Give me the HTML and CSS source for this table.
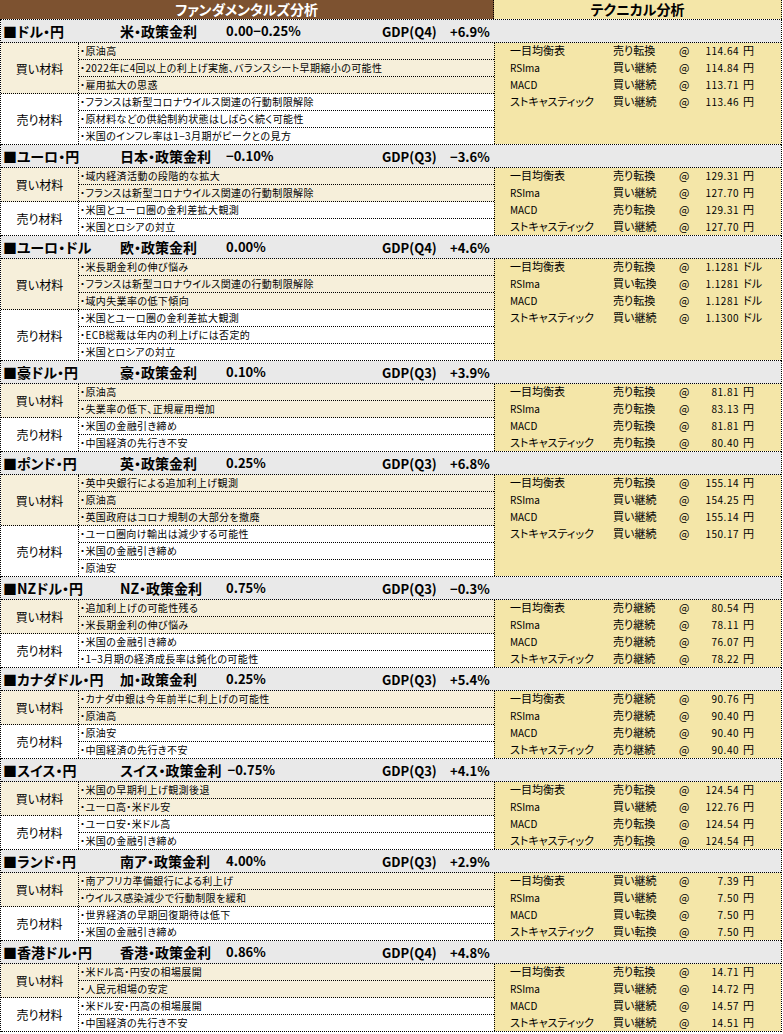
FILE: index.html
```html
<!DOCTYPE html>
<html lang="ja">
<head>
<meta charset="utf-8">
<title>ファンダメンタルズ分析 / テクニカル分析</title>
<link rel="stylesheet" href="styles.css">
</head>
<body>
<div class="sheet">
  <div class="head">
    <div class="head-left">ファンダメンタルズ分析</div>
    <div class="head-right">テクニカル分析</div>
  </div>

  <section class="pair">
    <div class="title"><span class="name">■ドル・円</span><span class="policy-block"><span class="policy">米・政策金利</span><span class="rate">0.00−0.25%</span></span><span class="gdp">GDP(Q4)</span><span class="growth">+6.9%</span></div>
    <div class="body">
      <div class="left">
        <div class="group buy"><div class="label">買い材料</div><ul class="items"><li>・原油高</li><li>・2022年に4回以上の利上げ実施、バランスシート早期縮小の可能性</li><li>・雇用拡大の思惑</li></ul></div>
        <div class="group sell"><div class="label">売り材料</div><ul class="items"><li>・フランスは新型コロナウイルス関連の行動制限解除</li><li>・原材料などの供給制約状態はしばらく続く可能性</li><li>・米国のインフレ率は1−3月期がピークとの見方</li></ul></div>
      </div>
      <div class="tech">
        <span>一目均衡表</span><span>売り転換</span><span>@</span><span class="val">114.64</span><span class="unit">円</span>
        <span class="sm">RSIma</span><span>買い継続</span><span>@</span><span class="val">114.84</span><span class="unit">円</span>
        <span class="sm">MACD</span><span>買い継続</span><span>@</span><span class="val">113.71</span><span class="unit">円</span>
        <span>ストキャスティック</span><span>買い継続</span><span>@</span><span class="val">113.46</span><span class="unit">円</span>
      </div>
    </div>
  </section>

  <section class="pair">
    <div class="title"><span class="name">■ユーロ・円</span><span class="policy-block"><span class="policy">日本・政策金利</span><span class="rate">−0.10%</span></span><span class="gdp">GDP(Q3)</span><span class="growth">−3.6%</span></div>
    <div class="body">
      <div class="left">
        <div class="group buy"><div class="label">買い材料</div><ul class="items"><li>・域内経済活動の段階的な拡大</li><li>・フランスは新型コロナウイルス関連の行動制限解除</li></ul></div>
        <div class="group sell"><div class="label">売り材料</div><ul class="items"><li>・米国とユーロ圏の金利差拡大観測</li><li>・米国とロシアの対立</li></ul></div>
      </div>
      <div class="tech">
        <span>一目均衡表</span><span>売り転換</span><span>@</span><span class="val">129.31</span><span class="unit">円</span>
        <span class="sm">RSIma</span><span>買い継続</span><span>@</span><span class="val">127.70</span><span class="unit">円</span>
        <span class="sm">MACD</span><span>売り転換</span><span>@</span><span class="val">129.31</span><span class="unit">円</span>
        <span>ストキャスティック</span><span>買い継続</span><span>@</span><span class="val">127.70</span><span class="unit">円</span>
      </div>
    </div>
  </section>

  <section class="pair">
    <div class="title"><span class="name">■ユーロ・ドル</span><span class="policy-block"><span class="policy">欧・政策金利</span><span class="rate">0.00%</span></span><span class="gdp">GDP(Q4)</span><span class="growth">+4.6%</span></div>
    <div class="body">
      <div class="left">
        <div class="group buy"><div class="label">買い材料</div><ul class="items"><li>・米長期金利の伸び悩み</li><li>・フランスは新型コロナウイルス関連の行動制限解除</li><li>・域内失業率の低下傾向</li></ul></div>
        <div class="group sell"><div class="label">売り材料</div><ul class="items"><li>・米国とユーロ圏の金利差拡大観測</li><li>・ECB総裁は年内の利上げには否定的</li><li>・米国とロシアの対立</li></ul></div>
      </div>
      <div class="tech">
        <span>一目均衡表</span><span>売り転換</span><span>@</span><span class="val">1.1281</span><span class="unit">ドル</span>
        <span class="sm">RSIma</span><span>買い転換</span><span>@</span><span class="val">1.1281</span><span class="unit">ドル</span>
        <span class="sm">MACD</span><span>売り転換</span><span>@</span><span class="val">1.1281</span><span class="unit">ドル</span>
        <span>ストキャスティック</span><span>買い継続</span><span>@</span><span class="val">1.1300</span><span class="unit">ドル</span>
      </div>
    </div>
  </section>

  <section class="pair">
    <div class="title"><span class="name">■豪ドル・円</span><span class="policy-block"><span class="policy">豪・政策金利</span><span class="rate">0.10%</span></span><span class="gdp">GDP(Q3)</span><span class="growth">+3.9%</span></div>
    <div class="body">
      <div class="left">
        <div class="group buy"><div class="label">買い材料</div><ul class="items"><li>・原油高</li><li>・失業率の低下、正規雇用増加</li></ul></div>
        <div class="group sell"><div class="label">売り材料</div><ul class="items"><li>・米国の金融引き締め</li><li>・中国経済の先行き不安</li></ul></div>
      </div>
      <div class="tech">
        <span>一目均衡表</span><span>売り転換</span><span>@</span><span class="val">81.81</span><span class="unit">円</span>
        <span class="sm">RSIma</span><span>売り転換</span><span>@</span><span class="val">83.13</span><span class="unit">円</span>
        <span class="sm">MACD</span><span>売り転換</span><span>@</span><span class="val">81.81</span><span class="unit">円</span>
        <span>ストキャスティック</span><span>売り転換</span><span>@</span><span class="val">80.40</span><span class="unit">円</span>
      </div>
    </div>
  </section>

  <section class="pair">
    <div class="title"><span class="name">■ポンド・円</span><span class="policy-block"><span class="policy">英・政策金利</span><span class="rate">0.25%</span></span><span class="gdp">GDP(Q3)</span><span class="growth">+6.8%</span></div>
    <div class="body">
      <div class="left">
        <div class="group buy"><div class="label">買い材料</div><ul class="items"><li>・英中央銀行による追加利上げ観測</li><li>・原油高</li><li>・英国政府はコロナ規制の大部分を撤廃</li></ul></div>
        <div class="group sell"><div class="label">売り材料</div><ul class="items"><li>・ユーロ圏向け輸出は減少する可能性</li><li>・米国の金融引き締め</li><li>・原油安</li></ul></div>
      </div>
      <div class="tech">
        <span>一目均衡表</span><span>売り転換</span><span>@</span><span class="val">155.14</span><span class="unit">円</span>
        <span class="sm">RSIma</span><span>買い継続</span><span>@</span><span class="val">154.25</span><span class="unit">円</span>
        <span class="sm">MACD</span><span>買い継続</span><span>@</span><span class="val">155.14</span><span class="unit">円</span>
        <span>ストキャスティック</span><span>買い継続</span><span>@</span><span class="val">150.17</span><span class="unit">円</span>
      </div>
    </div>
  </section>

  <section class="pair">
    <div class="title"><span class="name">■NZドル・円</span><span class="policy-block"><span class="policy">NZ・政策金利</span><span class="rate">0.75%</span></span><span class="gdp">GDP(Q3)</span><span class="growth">−0.3%</span></div>
    <div class="body">
      <div class="left">
        <div class="group buy"><div class="label">買い材料</div><ul class="items"><li>・追加利上げの可能性残る</li><li>・米長期金利の伸び悩み</li></ul></div>
        <div class="group sell"><div class="label">売り材料</div><ul class="items"><li>・米国の金融引き締め</li><li>・1−3月期の経済成長率は鈍化の可能性</li></ul></div>
      </div>
      <div class="tech">
        <span>一目均衡表</span><span>売り継続</span><span>@</span><span class="val">80.54</span><span class="unit">円</span>
        <span class="sm">RSIma</span><span>売り継続</span><span>@</span><span class="val">78.11</span><span class="unit">円</span>
        <span class="sm">MACD</span><span>売り継続</span><span>@</span><span class="val">76.07</span><span class="unit">円</span>
        <span>ストキャスティック</span><span>売り継続</span><span>@</span><span class="val">78.22</span><span class="unit">円</span>
      </div>
    </div>
  </section>

  <section class="pair">
    <div class="title"><span class="name">■カナダドル・円</span><span class="policy-block"><span class="policy">加・政策金利</span><span class="rate">0.25%</span></span><span class="gdp">GDP(Q3)</span><span class="growth">+5.4%</span></div>
    <div class="body">
      <div class="left">
        <div class="group buy"><div class="label">買い材料</div><ul class="items"><li>・カナダ中銀は今年前半に利上げの可能性</li><li>・原油高</li></ul></div>
        <div class="group sell"><div class="label">売り材料</div><ul class="items"><li>・原油安</li><li>・中国経済の先行き不安</li></ul></div>
      </div>
      <div class="tech">
        <span>一目均衡表</span><span>売り継続</span><span>@</span><span class="val">90.76</span><span class="unit">円</span>
        <span class="sm">RSIma</span><span>売り継続</span><span>@</span><span class="val">90.40</span><span class="unit">円</span>
        <span class="sm">MACD</span><span>売り継続</span><span>@</span><span class="val">90.40</span><span class="unit">円</span>
        <span>ストキャスティック</span><span>売り継続</span><span>@</span><span class="val">90.40</span><span class="unit">円</span>
      </div>
    </div>
  </section>

  <section class="pair">
    <div class="title"><span class="name">■スイス・円</span><span class="policy-block"><span class="policy">スイス・政策金利</span><span class="rate">−0.75%</span></span><span class="gdp">GDP(Q3)</span><span class="growth">+4.1%</span></div>
    <div class="body">
      <div class="left">
        <div class="group buy"><div class="label">買い材料</div><ul class="items"><li>・米国の早期利上げ観測後退</li><li>・ユーロ高・米ドル安</li></ul></div>
        <div class="group sell"><div class="label">売り材料</div><ul class="items"><li>・ユーロ安・米ドル高</li><li>・米国の金融引き締め</li></ul></div>
      </div>
      <div class="tech">
        <span>一目均衡表</span><span>売り転換</span><span>@</span><span class="val">124.54</span><span class="unit">円</span>
        <span class="sm">RSIma</span><span>買い継続</span><span>@</span><span class="val">122.76</span><span class="unit">円</span>
        <span class="sm">MACD</span><span>売り転換</span><span>@</span><span class="val">124.54</span><span class="unit">円</span>
        <span>ストキャスティック</span><span>売り転換</span><span>@</span><span class="val">124.54</span><span class="unit">円</span>
      </div>
    </div>
  </section>

  <section class="pair">
    <div class="title"><span class="name">■ランド・円</span><span class="policy-block"><span class="policy">南ア・政策金利</span><span class="rate">4.00%</span></span><span class="gdp">GDP(Q3)</span><span class="growth">+2.9%</span></div>
    <div class="body">
      <div class="left">
        <div class="group buy"><div class="label">買い材料</div><ul class="items"><li>・南アフリカ準備銀行による利上げ</li><li>・ウイルス感染減少で行動制限を緩和</li></ul></div>
        <div class="group sell"><div class="label">売り材料</div><ul class="items"><li>・世界経済の早期回復期待は低下</li><li>・米国の金融引き締め</li></ul></div>
      </div>
      <div class="tech">
        <span>一目均衡表</span><span>買い継続</span><span>@</span><span class="val">7.39</span><span class="unit">円</span>
        <span class="sm">RSIma</span><span>買い継続</span><span>@</span><span class="val">7.50</span><span class="unit">円</span>
        <span class="sm">MACD</span><span>買い転換</span><span>@</span><span class="val">7.50</span><span class="unit">円</span>
        <span>ストキャスティック</span><span>買い転換</span><span>@</span><span class="val">7.50</span><span class="unit">円</span>
      </div>
    </div>
  </section>

  <section class="pair">
    <div class="title"><span class="name">■香港ドル・円</span><span class="policy-block"><span class="policy">香港・政策金利</span><span class="rate">0.86%</span></span><span class="gdp">GDP(Q4)</span><span class="growth">+4.8%</span></div>
    <div class="body">
      <div class="left">
        <div class="group buy"><div class="label">買い材料</div><ul class="items"><li>・米ドル高・円安の相場展開</li><li>・人民元相場の安定</li></ul></div>
        <div class="group sell"><div class="label">売り材料</div><ul class="items"><li>・米ドル安・円高の相場展開</li><li>・中国経済の先行き不安</li></ul></div>
      </div>
      <div class="tech">
        <span>一目均衡表</span><span>売り転換</span><span>@</span><span class="val">14.71</span><span class="unit">円</span>
        <span class="sm">RSIma</span><span>買い継続</span><span>@</span><span class="val">14.72</span><span class="unit">円</span>
        <span class="sm">MACD</span><span>買い継続</span><span>@</span><span class="val">14.57</span><span class="unit">円</span>
        <span>ストキャスティック</span><span>買い継続</span><span>@</span><span class="val">14.51</span><span class="unit">円</span>
      </div>
    </div>
  </section>
</div>
</body>
</html>
```

FILE: styles.css
```css
* { box-sizing: border-box; }

html, body {
  margin: 0;
  padding: 0;
  background: #ffffff;
}

body {
  font-family: "Noto Sans CJK JP", "Liberation Sans", sans-serif;
  font-feature-settings: "palt";
  color: #000;
}

.sheet {
  width: 782px;
}

.head {
  display: flex;
  height: 20px;
  border-bottom: 1px dotted #000;
}

.head-left {
  width: 494px;
  background: #7d5230;
  color: #fff;
  border-right: 1px dotted #000;
  font-weight: bold;
  font-size: 14px;
  line-height: 19px;
  text-align: center;
}

.head-right {
  flex: 1;
  background: #f4e6a8;
  font-weight: bold;
  font-size: 14px;
  line-height: 19px;
  text-align: center;
  border-right: 1px dotted #000;
}

.pair {
  border-left: 1px dotted #000;
  border-right: 1px dotted #000;
}

.title {
  display: flex;
  align-items: center;
  height: 23px;
  padding-left: 2px;
  background: #e9e9e9;
  border-bottom: 1px dotted #000;
  font-weight: bold;
  font-size: 14px;
  white-space: nowrap;
}

.name {
  width: 117px;
}

.policy-block {
  width: 262px;
  display: flex;
}

.policy {
  min-width: 100px;
  margin-right: 6px;
}

.rate,
.gdp,
.growth {
  font-size: 13px;
}

.gdp {
  width: 68px;
}

.body {
  display: flex;
  border-bottom: 1px dotted #000;
}

.left {
  width: 493px;
}

.group {
  display: flex;
}

.buy {
  background: #f6efda;
  border-bottom: 1px dotted #000;
}

.sell {
  background: #ffffff;
}

.label {
  width: 78px;
  border-right: 1px dotted #000;
  display: flex;
  align-items: center;
  justify-content: center;
  font-size: 12px;
}

.items {
  flex: 1;
  list-style: none;
  margin: 0;
  padding: 0;
}

.items li {
  height: 17px;
  line-height: 16px;
  font-size: 10px;
  letter-spacing: 0.4px;
  padding-left: 1px;
  border-bottom: 1px dotted #000;
  white-space: nowrap;
}

.items li:last-child {
  height: 16px;
  border-bottom: none;
}

.tech {
  flex: 1;
  background: #f4e6a8;
  border-left: 1px dotted #000;
  padding-left: 15px;
  display: grid;
  grid-template-columns: 103px 66px 21px 39px auto;
  grid-template-rows: 17px 17px 17px 16px;
  align-content: start;
  font-size: 11px;
  line-height: 15px;
  white-space: nowrap;
}

.tech .sm {
  font-size: 10px;
}

.tech .val {
  text-align: right;
  font-size: 10px;
  letter-spacing: 0.5px;
}

.tech .unit {
  padding-left: 4px;
}
```
